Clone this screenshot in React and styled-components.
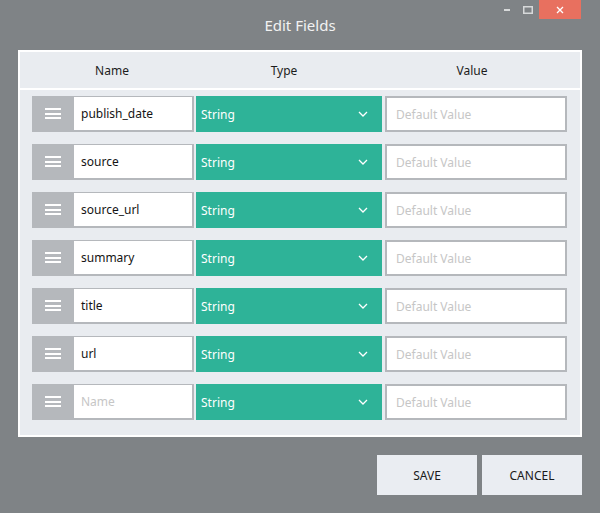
import React from 'react'
import styled, { createGlobalStyle } from 'styled-components'

const GlobalStyle = createGlobalStyle`
  html, body {
    margin: 0;
    padding: 0;
    background: #7f8386;
    font-family: "Noto Sans", "Open Sans", sans-serif;
  }
`

const Page = styled.div`
  width: 600px;
  height: 513px;
  display: flex;
  flex-direction: column;
  background: #7f8386;
`

const TitleBar = styled.div`
  height: 50px;
  display: grid;
  grid-template-columns: 1fr auto 1fr;
`

const Title = styled.div`
  align-self: center;
  color: #f2f2f2;
  font-size: 15px;
  padding-bottom: 1px;
`

const Controls = styled.div`
  justify-self: end;
  align-self: start;
  display: flex;
  align-items: flex-start;
  padding-right: 19px;
`

const Ctrl = styled.div`
  width: ${p => p.$w}px;
  height: 19px;
  display: flex;
  align-items: center;
  justify-content: center;
  background: ${p => p.$bg || 'transparent'};
`

const Panel = styled.div`
  margin: 0 18px;
  border: 2px solid #ffffff;
  background: #e9ecf0;
  display: flex;
  flex-direction: column;
`

const Header = styled.div`
  height: 36px;
  border-bottom: 2px solid #ffffff;
  display: grid;
  grid-template-columns: 184px 160px 216px;
  align-items: center;
  font-size: 12px;
  color: #1c1c1c;
`

const HeadCell = styled.div`
  text-align: center;
`

const Body = styled.div`
  padding: 6px 13px 15px 12px;
  display: flex;
  flex-direction: column;
  gap: 12px;
`

const Row = styled.div`
  display: grid;
  grid-template-columns: 162px 186px 183px;
  column-gap: 2px;
  height: 36px;
  & > :last-child {
    margin-left: 1px;
  }
`

const NameGroup = styled.div`
  display: flex;
  background: #b5b8bc;
  padding: 1px 2px 2px 0;
`

const Handle = styled.div`
  width: 42px;
  display: flex;
  flex-direction: column;
  align-items: center;
  justify-content: center;
  gap: 2.5px;
  & span {
    width: 16px;
    height: 2px;
    background: #ffffff;
  }
`

const Field = styled.div`
  flex: 1;
  background: #ffffff;
  display: flex;
  align-items: center;
  padding-left: ${p => p.$pad}px;
  font-size: 12px;
  color: ${p => (p.$placeholder ? '#c6c6c6' : '#141414')};
`

const ValueBox = styled.div`
  display: flex;
  border: 2px solid #b5b8bc;
  background: #ffffff;
`

const Select = styled.div`
  background: #2eb398;
  color: #ffffff;
  font-size: 12px;
  display: flex;
  align-items: center;
  justify-content: space-between;
  padding: 0 14px 0 5px;
`

const Footer = styled.div`
  display: flex;
  justify-content: flex-end;
  gap: 5px;
  padding: 18px 18px 0 0;
`

const Button = styled.div`
  width: 100px;
  height: 40px;
  background: #eaedf2;
  color: #1a1a1a;
  font-size: 12px;
  display: flex;
  align-items: center;
  justify-content: center;
`

const fields = ['publish_date', 'source', 'source_url', 'summary', 'title', 'url', '']

function Chevron() {
  return (
    <svg width="10" height="6" viewBox="0 0 10 6">
      <polyline points="1,1 5,5 9,1" fill="none" stroke="#ffffff" strokeWidth="1.3" />
    </svg>
  )
}

export default function App() {
  return (
    <Page>
      <GlobalStyle />
      <TitleBar>
        <div />
        <Title>Edit Fields</Title>
        <Controls>
          <Ctrl $w={20}>
            <svg width="6" height="2"><rect width="6" height="2" fill="#d7d9da" /></svg>
          </Ctrl>
          <Ctrl $w={22}>
            <svg width="10" height="8"><rect x="0.75" y="0.75" width="8.5" height="6.5" fill="none" stroke="#d7d9da" strokeWidth="1.5" /></svg>
          </Ctrl>
          <Ctrl $w={42} $bg="#e8705f">
            <svg width="8" height="8" viewBox="0 0 8 8">
              <path d="M1 1 L7 7 M7 1 L1 7" stroke="#ffffff" strokeWidth="1.3" />
            </svg>
          </Ctrl>
        </Controls>
      </TitleBar>

      <Panel>
        <Header>
          <HeadCell>Name</HeadCell>
          <HeadCell>Type</HeadCell>
          <HeadCell>Value</HeadCell>
        </Header>
        <Body>
          {fields.map((name, i) => (
            <Row key={i}>
              <NameGroup>
                <Handle>
                  <span />
                  <span />
                  <span />
                </Handle>
                <Field $pad={7} $placeholder={!name}>{name || 'Name'}</Field>
              </NameGroup>
              <Select>
                <span>String</span>
                <Chevron />
              </Select>
              <ValueBox>
                <Field $pad={9} $placeholder>Default Value</Field>
              </ValueBox>
            </Row>
          ))}
        </Body>
      </Panel>

      <Footer>
        <Button>SAVE</Button>
        <Button>CANCEL</Button>
      </Footer>
    </Page>
  )
}
